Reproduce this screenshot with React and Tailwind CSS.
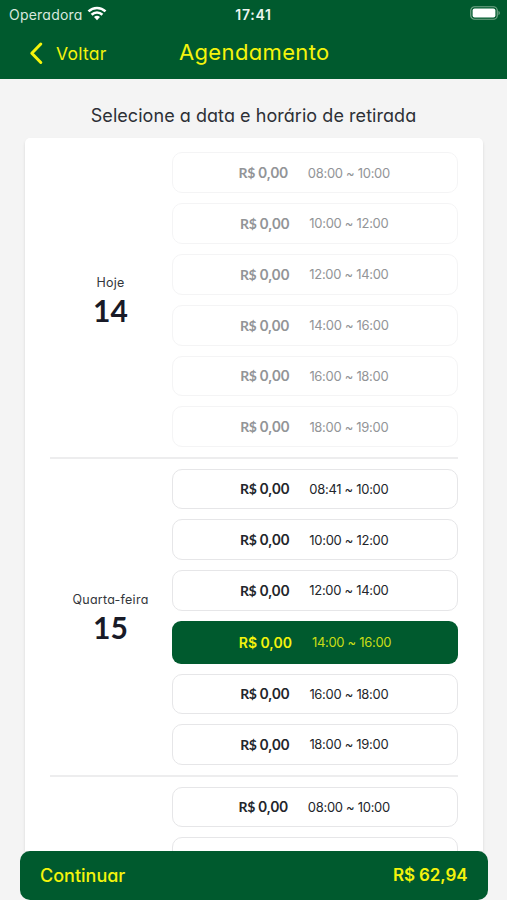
const DAYS = [
  {
    label: 'Hoje',
    day: '14',
    disabled: true,
    slots: ['08:00 ~ 10:00', '10:00 ~ 12:00', '12:00 ~ 14:00', '14:00 ~ 16:00', '16:00 ~ 18:00', '18:00 ~ 19:00'],
  },
  {
    label: 'Quarta-feira',
    day: '15',
    slots: ['08:41 ~ 10:00', '10:00 ~ 12:00', '12:00 ~ 14:00', '14:00 ~ 16:00', '16:00 ~ 18:00', '18:00 ~ 19:00'],
    selected: 3,
  },
  {
    label: 'Quinta-feira',
    day: '16',
    slots: ['08:00 ~ 10:00', '10:00 ~ 12:00', '12:00 ~ 14:00', '14:00 ~ 16:00', '16:00 ~ 18:00', '18:00 ~ 19:00'],
  },
];

function StatusBar() {
  return (
    <div className="grid h-7 grid-cols-3 items-center pl-[9px] pr-1.5 text-[#d9e8df]">
      <div className="flex items-center gap-[5px]">
        <span className="text-[14px] tracking-[0.22px]">Operadora</span>
        <svg className="-ml-px" width="20" height="16" viewBox="0 0 20 16" fill="none" stroke="#fff" strokeWidth="2.6">
          <path d="M1.5 5.4a12.2 12.2 0 0 1 17 0" />
          <path d="M4.6 8.7a7.8 7.8 0 0 1 10.8 0" />
          <path d="M10 14.2l-3-3.1a4.3 4.3 0 0 1 6 0z" fill="#fff" stroke="none" />
        </svg>
      </div>
      <span className="pr-[3px] text-center text-[14px] font-semibold tracking-[0.75px] text-[#edf5f0]">17:41</span>
      <svg className="-mt-0.5 justify-self-end" width="31" height="14" viewBox="0 0 31 14">
        <rect x="0.75" y="0.75" width="26.5" height="12.5" rx="3.8" fill="none" stroke="#75a78a" strokeWidth="1.2" />
        <rect x="2.6" y="2.6" width="22.8" height="8.8" rx="2" fill="#fff" />
        <path d="M28.5 4.8c1.8.7 1.8 3.7 0 4.4z" fill="#75a78a" />
      </svg>
    </div>
  );
}

function Header() {
  return (
    <header className="h-[79px] shrink-0 bg-[#005a2e] text-[#f4f40c]">
      <StatusBar />
      <div className="flex h-[50px] items-center pl-[29px]">
        <svg className="-mt-px" width="15" height="24" viewBox="0 0 15 24" fill="none" stroke="currentColor" strokeWidth="3" strokeLinecap="round" strokeLinejoin="round">
          <path d="M11.8 3L2.8 12.3L11.8 21.5" />
        </svg>
        <span className="ml-3 w-[123px] pt-0.5 text-[17.5px] tracking-[0.25px]">Voltar</span>
        <h1 className="-mt-0.5 text-[22px] tracking-[0.35px]">Agendamento</h1>
      </div>
    </header>
  );
}

function Slot({ time, disabled, selected }) {
  if (selected) {
    return (
      <button className="flex h-[42.6px] items-center justify-center gap-5 rounded-[9px] bg-[#005a2e] text-[#f4f40c]">
        <span className="text-[14px] font-semibold">R$ 0,00</span>
        <span className="pt-px text-[13px] tracking-[-0.3px] text-[#c9de16]">{time}</span>
      </button>
    );
  }

  return (
    <button
      className={`flex h-[40.8px] items-center justify-center gap-5 rounded-[10px] border-[1.5px] pr-[1.5px] ${
        disabled ? 'border-[#f4f4f5] text-[#929497]' : 'border-[#e6e6e8] text-[#22252b]'
      }`}
    >
      <span className="text-[14px] font-semibold tracking-[-0.4px]">
        <span className="font-['Lato',sans-serif] text-[14px] font-bold">R$</span> 0,00
      </span>
      <span className="pt-px text-[13px] tracking-[-0.3px]">{time}</span>
    </button>
  );
}

function Day({ label, day, slots, disabled, selected }) {
  return (
    <section className="flex shrink-0 border-b-2 border-[#ededee] pb-[9.8px]">
      <div className="flex w-[122px] flex-col items-center justify-center pt-[3px] pr-px">
        <span className="text-[12.5px] leading-[18px] tracking-[0.25px] text-[#33363b]">{label}</span>
        <span className="font-['Lato',sans-serif] text-[30px] leading-[37px] font-bold text-[#181a27]">{day}</span>
      </div>
      <div className="flex flex-1 flex-col gap-2.5">
        {slots.map((time, idx) => (
          <Slot key={time} time={time} disabled={disabled} selected={selected === idx} />
        ))}
      </div>
    </section>
  );
}

export default function App() {
  return (
    <div className="flex h-[900px] w-[507px] flex-col overflow-hidden bg-[#f4f4f4] font-['Inter',sans-serif] [font-feature-settings:'cv11']">
      <Header />
      <h2 className="flex h-[59px] shrink-0 items-center justify-center pt-[14px] text-[18px] tracking-[0.05px] text-[#2d3036]">
        Selecione a data e horário de retirada
      </h2>
      <main className="mr-6 ml-[25px] flex h-[713px] shrink-0 flex-col gap-[9.6px] overflow-hidden rounded-t-[5px] bg-white px-[25px] pt-[14.4px] shadow-[0_2px_3px_rgba(0,0,0,0.12)]">
        {DAYS.map((d) => (
          <Day key={d.day} {...d} />
        ))}
      </main>
      <button className="relative mr-[19.5px] ml-5 flex h-[49px] shrink-0 items-center justify-between rounded-[10px] bg-[#005a2e] pr-5 pl-5 text-[#f4f40c]">
        <span className="text-[18px] font-medium">Continuar</span>
        <span className="text-[17px] font-semibold tracking-[-0.1px]">R$ 62,94</span>
      </button>
    </div>
  );
}
